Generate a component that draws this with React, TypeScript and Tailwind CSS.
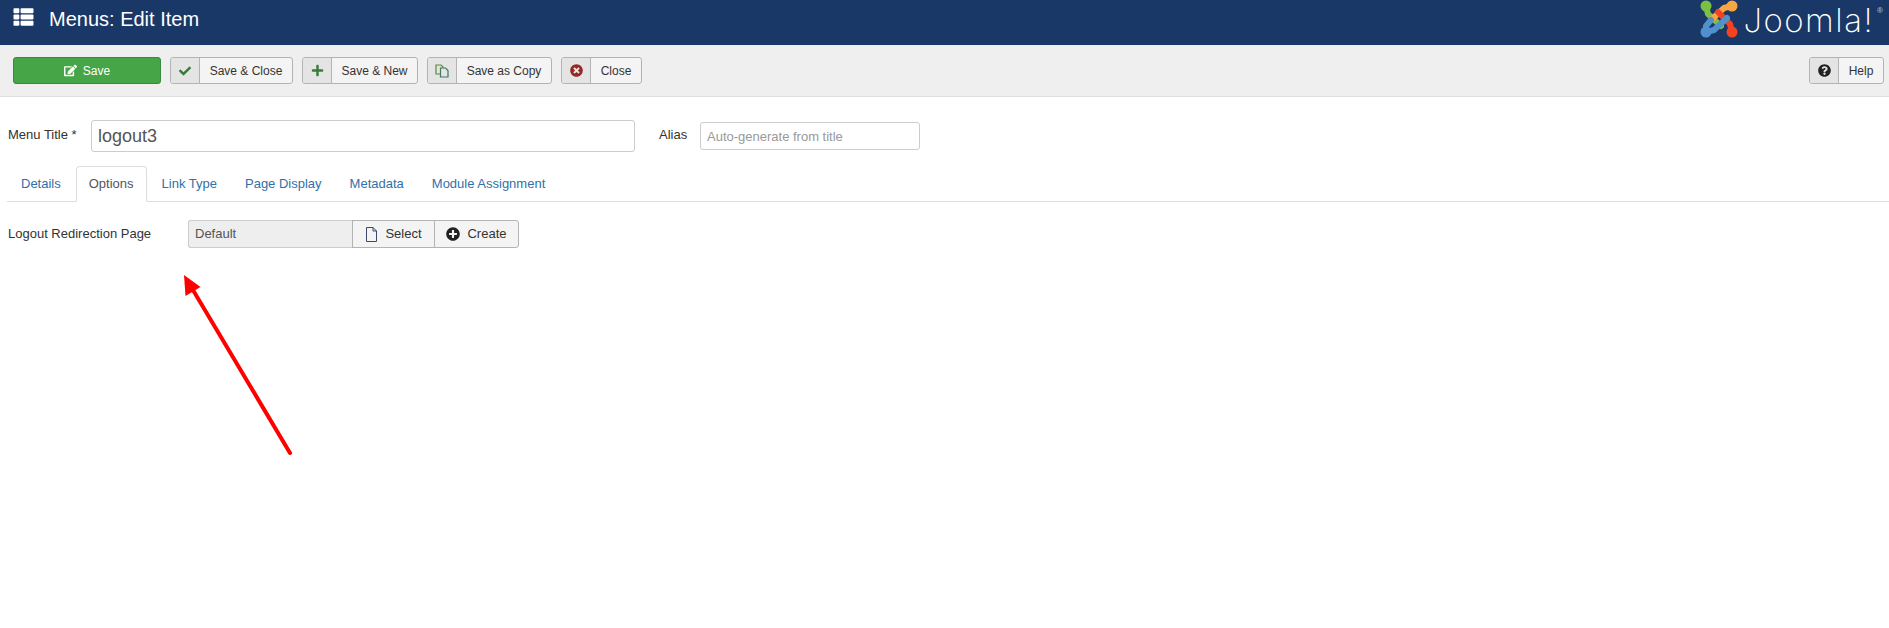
import type { ReactNode } from "react";
import {
    FaCheck,
    FaPlus,
    FaTimesCircle,
    FaQuestionCircle,
    FaPlusCircle,
    FaEdit,
    FaThList,
} from "react-icons/fa";

function ToolButton({
    icon,
    label,
    width,
}: {
    icon: ReactNode;
    label: string;
    width: string;
}) {
    return (
        <button
            className={`flex h-[27px] items-stretch rounded-[3px] border border-[#b3b3b3] bg-[#f4f4f4] text-[12px] text-[#333] ${width}`}
        >
            <span className="flex w-[29px] shrink-0 items-center justify-center rounded-l-[3px] border-r border-[#b3b3b3] bg-[#e4e4e4]">
                {icon}
            </span>
            <span className="flex flex-1 items-center justify-center">
                {label}
            </span>
        </button>
    );
}

function CopyIcon() {
    return (
        <svg width="14" height="14" viewBox="0 0 14 14" fill="none" strokeWidth="1.2">
            <path d="M1 1 H6 L8 3 V10 H1 Z" stroke="#5d8a3a" />
            <path d="M5.5 4 H10.5 L13 6.5 V13 H5.5 Z" fill="#e4e4e4" stroke="#3f7a5a" />
        </svg>
    );
}

function FileIcon() {
    return (
        <svg width="13" height="15" viewBox="0 0 13 15" fill="none" stroke="#3a4a6a" strokeWidth="1">
            <path d="M1.5 .5 H8 L11.5 4 V14.5 H1.5 Z" />
            <path d="M8 .5 V4 H11.5" />
        </svg>
    );
}

function JoomlaLogo() {
    return (
        <svg width="38" height="38" viewBox="0 0 38 38" fill="none" strokeLinecap="round" strokeLinejoin="round">
            <path d="M6 6 L8 14 L21 26" stroke="#7ac143" strokeWidth="6" />
            <circle cx="6" cy="6" r="5.5" fill="#7ac143" />
            <path d="M32 6 L24 8 L11 20" stroke="#f9a541" strokeWidth="6" />
            <circle cx="32" cy="6" r="5.5" fill="#f9a541" />
            <path d="M18 12 L30 24 L32 32" stroke="#f44321" strokeWidth="6" />
            <circle cx="32" cy="32" r="5.5" fill="#f44321" />
            <path d="M6 32 L14 30 L27 18" stroke="#5091cd" strokeWidth="6" />
            <path d="M6 32 L6 26 L11 20" stroke="#5091cd" strokeWidth="6" />
            <circle cx="6" cy="32" r="5.5" fill="#5091cd" />
        </svg>
    );
}

const tabs = ["Details", "Options", "Link Type", "Page Display", "Metadata", "Module Assignment"];

export default function App() {
    return (
        <div className="relative h-[628px] w-[1889px] overflow-hidden bg-white font-['Liberation_Sans',Arial,sans-serif] text-[13px] text-[#333]">
            {/* top bar */}
            <header className="flex h-[45px] items-start bg-[#1a3867] pl-[13px] pr-[6px] text-white">
                <FaThList className="mt-[7px] h-[20px] w-[21px]" />
                <h1 className="ml-[15px] mt-[8px] text-[20px] leading-[23px]">Menus: Edit Item</h1>
                <div className="ml-auto flex items-start">
                    <JoomlaLogo />
                    <span className="ml-[5px] mt-[1px] font-['Inter',sans-serif] text-[33px] font-extralight leading-[38px] tracking-[1.5px]">
                        Joomla!
                    </span>
                    <span className="ml-[3px] mt-[7px] text-[8px] leading-none text-[#ccc]">®</span>
                </div>
            </header>

            {/* toolbar */}
            <div className="flex h-[52px] items-center gap-[9px] border-b border-[#dedede] bg-[#efefef] pl-[13px] pr-[5px] text-[12px]">
                <button className="flex h-[27px] w-[148px] items-center justify-center gap-[6px] rounded-[3px] border border-[#3a8a3e] bg-[#46a546] text-white">
                    <FaEdit className="h-[13px] w-[13px]" />
                    Save
                </button>
                <ToolButton width="w-[123px]" label="Save & Close" icon={<FaCheck className="h-[12px] w-[12px] text-[#387a38]" />} />
                <ToolButton width="w-[116px]" label="Save & New" icon={<FaPlus className="h-[13px] w-[13px] text-[#387a38]" />} />
                <ToolButton width="w-[125px]" label="Save as Copy" icon={<CopyIcon />} />
                <ToolButton width="w-[81px]" label="Close" icon={<FaTimesCircle className="h-[13px] w-[13px] text-[#942a25]" />} />
                <div className="ml-auto">
                    <ToolButton width="w-[75px]" label="Help" icon={<FaQuestionCircle className="h-[13px] w-[13px] text-[#222]" />} />
                </div>
            </div>

            {/* title row */}
            <div className="flex items-center pl-[8px] pt-[23px]">
                <label className="w-[83px] -translate-y-[1px]">Menu Title *</label>
                <input
                    readOnly
                    value="logout3"
                    className="h-[32px] w-[544px] rounded-[3px] border border-[#ccc] px-[6px] text-[18px] text-[#555] outline-none"
                />
                <label className="ml-[24px] w-[41px] -translate-y-[1px]">Alias</label>
                <input
                    readOnly
                    placeholder="Auto-generate from title"
                    className="h-[28px] w-[220px] rounded-[3px] border border-[#ccc] px-[6px] text-[13px] outline-none placeholder:text-[#999]"
                />
            </div>

            {/* tabs */}
            <nav className="ml-[7px] mt-[14px] flex h-[36px] gap-[2px] border-b border-[#ddd] pl-[1px]">
                {tabs.map((tab) =>
                    tab === "Options" ? (
                        <span
                            key={tab}
                            className="mb-[-1px] flex h-[36px] items-center rounded-t-[4px] border border-[#ddd] border-b-white bg-white px-[12px] text-[#555]"
                        >
                            {tab}
                        </span>
                    ) : (
                        <span key={tab} className="flex h-[35px] items-center px-[13px] text-[#3071a9]">
                            {tab}
                        </span>
                    ),
                )}
            </nav>

            {/* field */}
            <div className="flex items-center pl-[8px] pt-[18px]">
                <label className="w-[180px]">Logout Redirection Page</label>
                <div className="flex h-[28px]">
                    <div className="flex w-[164px] items-center rounded-l-[3px] border border-r-0 border-[#ccc] bg-[#eee] pl-[6px] text-[#555]">
                        Default
                    </div>
                    <button className="flex w-[83px] items-center justify-center gap-[7px] border border-[#b3b3b3] bg-[#f4f4f4]">
                        <FileIcon />
                        Select
                    </button>
                    <button className="ml-[-1px] flex w-[85px] items-center justify-center gap-[7px] rounded-r-[3px] border border-[#b3b3b3] bg-[#f4f4f4]">
                        <FaPlusCircle className="h-[14px] w-[14px] text-[#222]" />
                        Create
                    </button>
                </div>
            </div>

            {/* annotation arrow */}
            <svg className="absolute left-0 top-0" width="400" height="500" fill="none">
                <path d="M290 453 L190 285" stroke="#ff0000" strokeWidth="4" strokeLinecap="round" />
                <path d="M184 275 L200.5 287 L185.5 296 Z" fill="#ff0000" />
            </svg>
        </div>
    );
}
